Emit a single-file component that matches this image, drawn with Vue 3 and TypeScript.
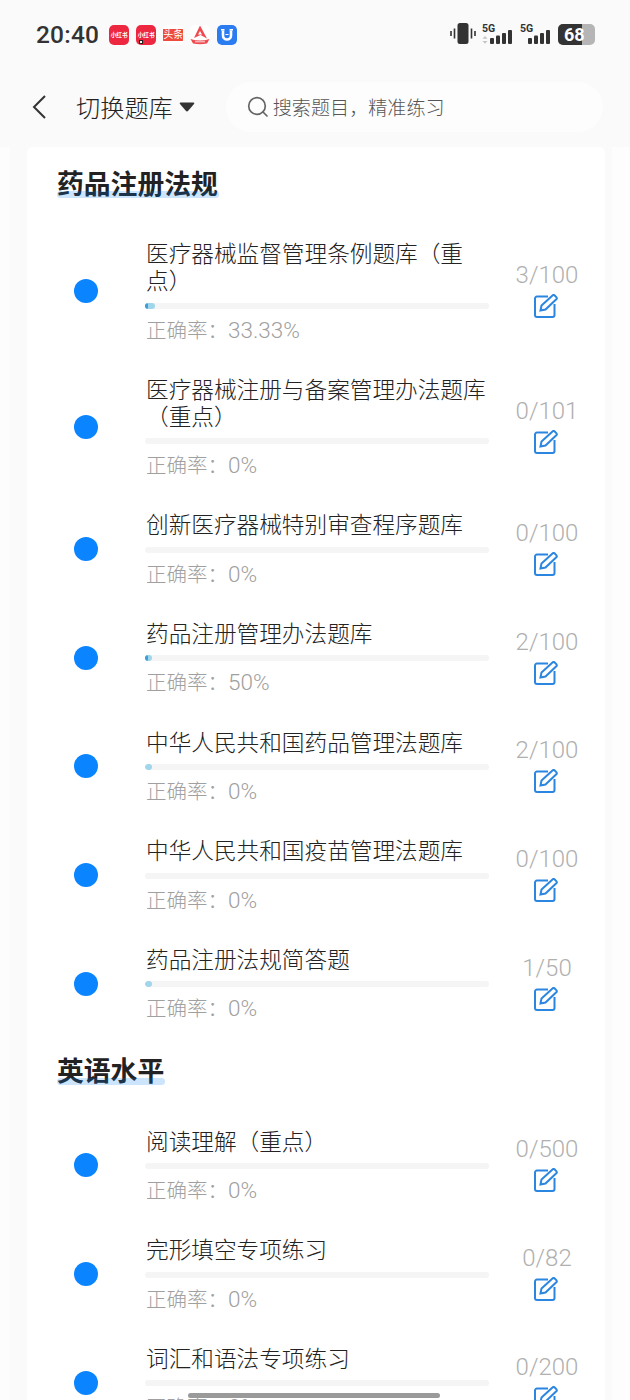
<script setup lang="ts">
interface Bank {
  title: string
  done: number
  total: number
  rate: string
}

interface Group {
  name: string
  banks: Bank[]
}

const groups: Group[] = [
  {
    name: '药品注册法规',
    banks: [
      { title: '医疗器械监督管理条例题库（重点）', done: 3, total: 100, rate: '33.33' },
      { title: '医疗器械注册与备案管理办法题库（重点）', done: 0, total: 101, rate: '0' },
      { title: '创新医疗器械特别审查程序题库', done: 0, total: 100, rate: '0' },
      { title: '药品注册管理办法题库', done: 2, total: 100, rate: '50' },
      { title: '中华人民共和国药品管理法题库', done: 2, total: 100, rate: '0' },
      { title: '中华人民共和国疫苗管理法题库', done: 0, total: 100, rate: '0' },
      { title: '药品注册法规简答题', done: 1, total: 50, rate: '0' }
    ]
  },
  {
    name: '英语水平',
    banks: [
      { title: '阅读理解（重点）', done: 0, total: 500, rate: '0' },
      { title: '完形填空专项练习', done: 0, total: 82, rate: '0' },
      { title: '词汇和语法专项练习', done: 0, total: 200, rate: '0' }
    ]
  }
]

function doneWidth(b: Bank) {
  return (b.done / b.total) * 100 + '%'
}

function rightWidth(b: Bank) {
  return (b.done / b.total) * Number(b.rate) + '%'
}
</script>

<template>
  <div class="page">
    <div class="status-bar">
      <span class="time">20:40</span>
      <div class="apps">
        <span class="app red">小红书</span>
        <span class="app red">小红书<i class="app-dot"></i></span>
        <span class="app toutiao"><b>头条</b></span>
        <svg class="app-svg" viewBox="0 0 20 20">
          <rect width="20" height="20" rx="4" fill="#fff" />
          <path d="M10 0.500L17 13.500L10.500 10L4 13Z" fill="#ee4a50" />
          <path d="M10 6L12 9.500H8Z" fill="#fff" />
          <path d="M0.500 14Q10 17 19.500 14L17 18.500Q10 20 3 18.500Z" fill="#ee4a50" />
          <path d="M5 16.800H15" stroke="#fff" stroke-width="0.800" />
        </svg>
        <svg class="app-svg" viewBox="0 0 20 20">
          <rect width="20" height="20" rx="4" fill="#2b7cf0" />
          <path d="M6 5.500V10.500A4 4 0 0 0 14 10.500V5.500" fill="none" stroke="#fff" stroke-width="2.600" />
          <path d="M4 4.800H7.500M12.500 4.800H16" stroke="#fff" stroke-width="1.600" />
          <path d="M8.500 9.500H11.500" stroke="#fff" stroke-width="1.200" />
        </svg>
      </div>
      <div class="indicators">
        <svg width="26" height="22" viewBox="0 0 26 22">
          <rect x="7.500" y="0" width="11" height="21" rx="2.500" fill="#333" />
          <path d="M4.500 5.500V15.500M1 8V13M21.500 5.500V15.500M25 8V13" stroke="#333" stroke-width="1.600" />
        </svg>
        <svg width="32" height="22" viewBox="0 0 32 22">
          <text x="0" y="9" class="five-g">5G</text>
          <path d="M3 13L5.500 15.800H0.500ZM3 20.800L5.500 18H0.500Z" fill="#c4c4c4" />
          <rect x="8" y="15" width="4" height="6" rx="1" fill="#333" />
          <rect x="14" y="12.500" width="4" height="8.500" rx="1" fill="#333" />
          <rect x="20" y="10" width="4" height="11" rx="1" fill="#333" />
          <rect x="26" y="7" width="4" height="14" rx="1" fill="#333" />
        </svg>
        <svg width="32" height="22" viewBox="0 0 32 22">
          <text x="0" y="9" class="five-g">5G</text>
          <rect x="8" y="15" width="4" height="6" rx="1" fill="#333" />
          <rect x="14" y="12.500" width="4" height="8.500" rx="1" fill="#333" />
          <rect x="20" y="10" width="4" height="11" rx="1" fill="#333" />
          <rect x="26" y="7" width="4" height="14" rx="1" fill="#333" />
        </svg>
        <div class="battery"><span class="battery-level">68</span></div>
      </div>
    </div>

    <div class="nav">
      <svg class="back" width="16" height="26" viewBox="0 0 16 26">
        <path d="M14 2L3 13L14 24" fill="none" stroke="#333" stroke-width="2" />
      </svg>
      <div class="switcher">
        切换题库
        <svg width="16" height="10" viewBox="0 0 16 10">
          <path d="M1.500 0.500H14.500Q16 0.500 15 2L9.200 8.800Q8 10 6.800 8.800L1 2Q0 0.500 1.500 0.500Z" fill="#333" />
        </svg>
      </div>
      <div class="search">
        <svg width="22" height="22" viewBox="0 0 22 22">
          <circle cx="10" cy="10" r="8.300" fill="none" stroke="#666" stroke-width="1.700" />
          <path d="M16 16L20 20" stroke="#666" stroke-width="1.700" stroke-linecap="round" />
        </svg>
        <span>搜索题目，精准练习</span>
      </div>
    </div>

    <div class="wrap">
      <div class="card">
        <section v-for="group in groups" :key="group.name">
          <div class="group-head"><span class="group-name">{{ group.name }}</span></div>
          <div v-for="bank in group.banks" :key="bank.title" class="row">
            <span class="dot"></span>
            <div class="main">
              <div class="title">{{ bank.title }}</div>
              <div class="track">
                <div class="fill" :style="{ width: doneWidth(bank) }"></div>
                <div class="fill right" :style="{ width: rightWidth(bank) }"></div>
              </div>
              <div class="rate">正确率：<span class="rate-num">{{ bank.rate }}%</span></div>
            </div>
            <div class="side">
              <div class="count">{{ bank.done }}/{{ bank.total }}</div>
              <svg class="edit" width="24" height="24" viewBox="0 0 24 24" fill="none" stroke="#2a86e0" stroke-width="2">
                <path d="M14 2.500H3A2 2 0 0 0 1 4.500V21A2 2 0 0 0 3 23H18.500A2 2 0 0 0 20.500 21V10" />
                <path d="M6.500 16.500L7.500 11.500L18.500 1.500A1.600 1.600 0 0 1 20.700 1.500L22.300 3.100A1.600 1.600 0 0 1 22.300 5.300L11.500 15.500Z" />
              </svg>
            </div>
          </div>
        </section>
      </div>
    </div>

    <div class="home-bar"></div>
  </div>
</template>

<style>
html,
body {
  overflow: hidden;
  background: #fdfdfd;
}
</style>

<style scoped>
.page {
  position: relative;
  width: 630px;
  height: 1400px;
  overflow: hidden;
  background: #fdfdfd;
  font-family: "Roboto", "Noto Sans CJK SC", sans-serif;
  color: #333;
}

.status-bar {
  display: flex;
  align-items: center;
  height: 68px;
  padding: 0 35px 0 36px;
  box-sizing: border-box;
  background: #fafafa;
}

.time {
  font-size: 24.500px;
  font-weight: 500;
  letter-spacing: 0.200px;
  color: #333;
}

.apps {
  display: flex;
  gap: 7px;
  margin-left: 10px;
  margin-top: 1px;
}

.app,
.app-svg {
  position: relative;
  display: flex;
  align-items: center;
  justify-content: center;
  width: 20px;
  height: 20px;
  border-radius: 5px;
  font-size: 5.600px;
  font-weight: 700;
  white-space: nowrap;
  overflow: hidden;
}

.app.red {
  background: #ee2741;
  color: #fff;
}

.app-dot {
  position: absolute;
  left: 3px;
  bottom: 1px;
  width: 2px;
  height: 2px;
  background: #fff;
  border: 1px solid #222;
}

.toutiao {
  background: #fff;
}

.toutiao b {
  display: block;
  width: 20px;
  height: 12px;
  line-height: 12px;
  text-align: center;
  background: #ee4b3c;
  color: #fff;
  font-size: 10px;
  font-weight: 400;
}

.indicators {
  display: flex;
  align-items: center;
  gap: 6px;
  margin-left: auto;
}

.five-g {
  font-size: 10.500px;
  font-weight: 700;
  fill: #333;
}

.battery {
  width: 37px;
  height: 21px;
  border-radius: 5px;
  background: #b5b5b5;
  overflow: hidden;
}

.battery-level {
  display: block;
  width: 24px;
  height: 21px;
  padding-left: 6px;
  box-sizing: border-box;
  line-height: 21px;
  background: #333;
  color: #fff;
  font-size: 18px;
  font-weight: 700;
  white-space: nowrap;
}

.nav {
  display: flex;
  align-items: center;
  height: 79px;
  padding: 0 27px 2px 31px;
  box-sizing: border-box;
  background: #fafafa;
}

.back {
  flex: none;
}

.switcher {
  display: flex;
  align-items: center;
  gap: 6px;
  margin-left: 29px;
  font-size: 24.200px;
  font-weight: 300;
  color: #222;
  white-space: nowrap;
}

.search {
  display: flex;
  align-items: center;
  gap: 4px;
  flex: 1;
  height: 50px;
  margin-left: 31px;
  padding-left: 21px;
  border-radius: 25px;
  background: #fdfdfd;
  font-size: 19.100px;
  font-weight: 300;
  color: #555;
}

.wrap {
  width: 602px;
  margin-left: 10px;
  padding: 0 7px 0 17px;
  box-sizing: border-box;
  background: #fafafa;
}

.card {
  padding-top: 3.500px;
  background: #fff;
  border-radius: 6px 6px 0 0;
}

.group-head {
  display: flex;
  padding: 15px 0 20px 30px;
  line-height: 38px;
}

.group-name {
  position: relative;
  font-size: 26.800px;
  font-weight: 700;
  color: #222;
}

.group-name::after {
  content: "";
  position: absolute;
  left: 0;
  right: -1px;
  bottom: 6px;
  height: 7px;
  border-radius: 4px;
  background: rgba(0, 125, 240, 0.2);
}

.row {
  display: flex;
  align-items: center;
  padding-left: 47px;
}

.dot {
  flex: none;
  width: 24px;
  height: 24px;
  border-radius: 50%;
  background: #0a84ff;
  margin-right: 47px;
}

.main {
  width: 344px;
  flex: none;
  padding: 17.500px 0 15.670px;
}

.title {
  padding-left: 1px;
  font-size: 22.650px;
  font-weight: 300;
  line-height: 27px;
  color: #222;
}

.track {
  position: relative;
  height: 6px;
  margin: 7.500px 0 7px;
  border-radius: 3px;
  overflow: hidden;
  background: #f5f5f5;
}

.fill {
  position: absolute;
  left: 0;
  top: 0;
  height: 100%;
  border-radius: 3px;
  background: #9fd6ec;
}

.fill.right {
  background: #3d9fd8;
}

.rate {
  display: flex;
  align-items: baseline;
  height: 28px;
  padding-left: 1px;
  font-size: 20.500px;
  font-weight: 300;
  line-height: 28px;
  color: #a0a0a0;
}

.rate-num {
  font-size: 22.500px;
}

.side {
  flex: 1;
  display: flex;
  flex-direction: column;
  align-items: center;
}

.count {
  font-size: 24px;
  font-weight: 300;
  line-height: 22px;
  margin-bottom: 8px;
  color: #b0b0b0;
}

.edit {
  display: block;
  margin-right: 2px;
}

.home-bar {
  position: absolute;
  left: 188px;
  bottom: 2px;
  width: 252px;
  height: 5px;
  border-radius: 3px;
  background: #9a9a9a;
}
</style>
